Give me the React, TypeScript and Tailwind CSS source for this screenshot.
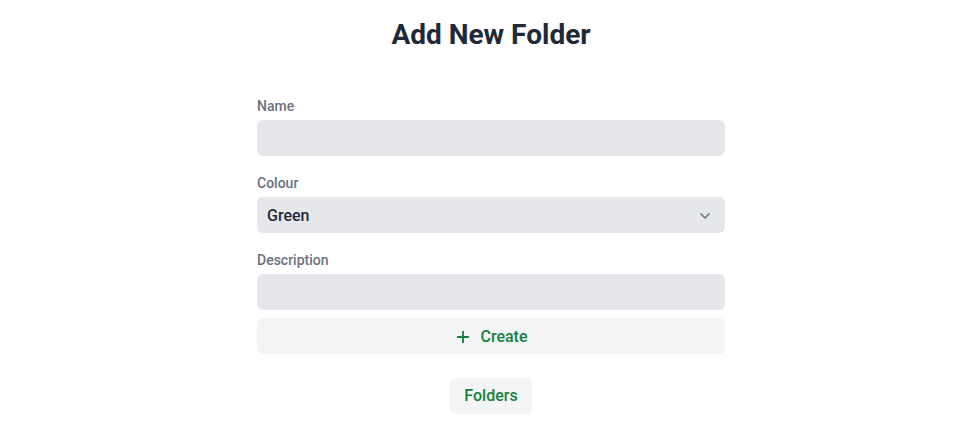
import { ChevronDown, Plus } from "lucide-react";

export default function App() {
  return (
    <div
      className="min-h-[447px] bg-white pl-[7px] pt-[18px]"
      style={{ fontFamily: "Roboto, 'Liberation Sans', sans-serif" }}
    >
      <h1 className="text-center text-[28px] font-bold leading-[34px] text-[#1f2937]">Add New Folder</h1>

      <form className="mx-auto mt-[44px] flex w-[468px] flex-col" onSubmit={(e) => e.preventDefault()}>
        <label className="mb-1 text-sm font-medium text-[#6b7280]">Name</label>
        <input className="h-9 rounded-md bg-[#e5e7eb] px-2.5 outline-none" />

        <label className="mb-1 mt-[17px] text-sm font-medium text-[#6b7280]">Colour</label>
        <div className="flex h-9 items-center justify-between rounded-md bg-[#e5e7eb] pl-2.5 pr-3 pt-px">
          <span className="text-base font-medium text-[#1f2937]">Green</span>
          <ChevronDown className="h-4 w-4 text-[#6b7280]" strokeWidth={2.5} />
        </div>

        <label className="mb-1 mt-[17px] text-sm font-medium text-[#6b7280]">Description</label>
        <input className="h-9 rounded-md bg-[#e5e7eb] px-2.5 outline-none" />

        <button
          type="submit"
          className="mt-2 flex h-9 items-center justify-center gap-2 rounded-md bg-[#f3f4f6] pt-px text-base font-medium text-[#15803d]"
        >
          <Plus className="h-[18px] w-[18px]" strokeWidth={2.5} />
          Create
        </button>
      </form>

      <div className="mt-6 flex justify-center">
        <button className="h-9 rounded-md bg-[#f3f4f6] px-[14px] text-base font-medium text-[#15803d]">Folders</button>
      </div>
    </div>
  );
}
